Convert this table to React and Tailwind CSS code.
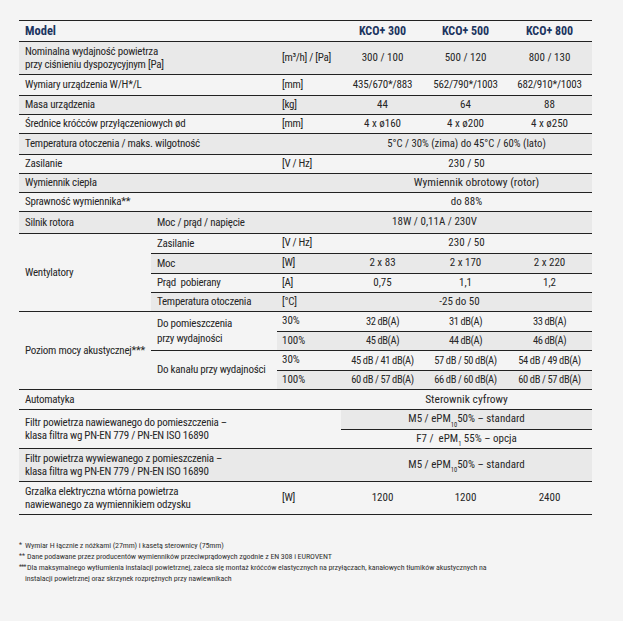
import React from "react";

const G = "bg-[#e9e9e9]";
const N = "text-[11px]";
const DB = "text-[10.5px] tracking-[-0.4px]";

function C({ className = "", children }) {
  return (
    <div className={"flex items-center whitespace-nowrap border-b border-[#222] " + className}>
      {children}
    </div>
  );
}

function L({ className = "", children }) {
  return (
    <C className={"pl-[6px] leading-[13.5px] text-[11px] tracking-[-0.25px] " + className}>
      {children}
    </C>
  );
}

function U({ className = "", children }) {
  return <C className={"pl-[5px] " + className}>{children}</C>;
}

function V({ className = "", children }) {
  return <C className={"justify-center text-center " + className}>{children}</C>;
}

const UL = "text-[11px] tracking-[-0.3px]";

export default function App() {
  return (
    <div
      className="w-[623px] h-[621px] bg-[#f4f4f4] text-[#262626] pt-[20px] pl-[19px]"
      style={{ fontFamily: '"Roboto Condensed", "DejaVu Sans Condensed", "Liberation Sans", sans-serif' }}
    >
      <div className="w-[573px] border-t border-[#222] grid grid-cols-[132px_126px_64px_83px_83px_85px] grid-rows-[21px_33px_21px_19px_19px_21px_19px_19px_19px_22px_20px_20px_19px_19px_20px_19px_20px_19px_20px_20px_19px_33px_33px] text-[11px]">
        {/* header */}
        <C className="col-span-3 pl-[6px] text-[12.5px] font-bold text-[#1c3560]">Model</C>
        <V className="text-[12px] font-bold text-[#1c3560]">KCO+ 300</V>
        <V className="text-[12px] font-bold text-[#1c3560]">KCO+ 500</V>
        <V className="text-[12px] font-bold text-[#1c3560]">KCO+ 800</V>

        {/* nominal */}
        <L className={"col-span-2 " + G}>
          <span>Nominalna wydajność powietrza<br />przy ciśnieniu dyspozycyjnym [Pa]</span>
        </L>
        <U className={UL + " " + G}>[m³/h] / [Pa]</U>
        <V className={N + " " + G}>300 / 100</V>
        <V className={N + " " + G}>500 / 120</V>
        <V className={N + " " + G}>800 / 130</V>

        {/* wymiary */}
        <L className="col-span-2">Wymiary urządzenia W/H*/L</L>
        <U className={UL}>[mm]</U>
        <V className={N + " tracking-[-0.2px]"}>435/670*/883</V>
        <V className={N + " tracking-[-0.2px]"}>562/790*/1003</V>
        <V className={N + " tracking-[-0.2px]"}>682/910*/1003</V>

        {/* masa */}
        <L className={"col-span-2 " + G}>Masa urządzenia</L>
        <U className={UL + " " + G}>[kg]</U>
        <V className={N + " " + G}>44</V>
        <V className={N + " " + G}>64</V>
        <V className={N + " " + G}>88</V>

        {/* srednice */}
        <L className="col-span-2">Średnice króćców przyłączeniowych ød</L>
        <U className={UL}>[mm]</U>
        <V className={N}>4 x ø160</V>
        <V className={N}>4 x ø200</V>
        <V className={N}>4 x ø250</V>

        {/* temperatura */}
        <L className={"col-span-3 " + G}>Temperatura otoczenia / maks. wilgotność</L>
        <V className={"col-span-3 text-[10.7px] " + G}>5°C / 30% (zima) do 45°C / 60% (lato)</V>

        {/* zasilanie */}
        <L className="col-span-2">Zasilanie</L>
        <U className={UL}>[V / Hz]</U>
        <V className={"col-span-3 " + N}>230 / 50</V>

        {/* wymiennik */}
        <L className={"col-span-3 " + G}>Wymiennik ciepła</L>
        <V className={"col-span-3 text-[11.5px] pl-[20px] " + G}>Wymiennik obrotowy (rotor)</V>

        {/* sprawnosc */}
        <L className="col-span-3">Sprawność wymiennika**</L>
        <V className={"col-span-3 " + N}>do 88%</V>

        {/* silnik */}
        <L className={G}>Silnik rotora</L>
        <L className={G}>Moc / prąd / napięcie</L>
        <V className={"col-span-4 " + N + " " + G}>18W / 0,11A / 230V</V>

        {/* wentylatory */}
        <L className="row-span-4">Wentylatory</L>
        <L>Zasilanie</L>
        <U className={UL}>[V / Hz]</U>
        <V className={"col-span-3 " + N}>230 / 50</V>

        <L className={G}>Moc</L>
        <U className={UL + " " + G}>[W]</U>
        <V className={N + " " + G}>2 x 83</V>
        <V className={N + " " + G}>2 x 170</V>
        <V className={N + " " + G}>2 x 220</V>

        <L>Prąd&nbsp; pobierany</L>
        <U className={UL}>[A]</U>
        <V className={N}>0,75</V>
        <V className={N}>1,1</V>
        <V className={N}>1,2</V>

        <L className={G}>Temperatura otoczenia</L>
        <U className={UL + " " + G}>[°C]</U>
        <V className={"col-span-3 pr-[14px] " + N + " " + G}>-25 do 50</V>

        {/* poziom */}
        <L className="row-span-4">Poziom mocy akustycznej***</L>
        <L className="row-span-2 leading-[15px]">
          <span>Do pomieszczenia<br />przy wydajności</span>
        </L>
        <U className={N}>30%</U>
        <V className={DB}>32 dB(A)</V>
        <V className={DB}>31 dB(A)</V>
        <V className={DB}>33 dB(A)</V>

        <U className={N + " " + G}>100%</U>
        <V className={DB + " " + G}>45 dB(A)</V>
        <V className={DB + " " + G}>44 dB(A)</V>
        <V className={DB + " " + G}>46 dB(A)</V>

        <L className="row-span-2">Do kanału przy wydajności</L>
        <U className={N}>30%</U>
        <V className={DB}>45 dB / 41 dB(A)</V>
        <V className={DB}>57 dB / 50 dB(A)</V>
        <V className={DB}>54 dB / 49 dB(A)</V>

        <U className={N + " " + G}>100%</U>
        <V className={DB + " " + G}>60 dB / 57 dB(A)</V>
        <V className={DB + " " + G}>66 dB / 60 dB(A)</V>
        <V className={DB + " " + G}>60 dB / 57 dB(A)</V>

        {/* automatyka */}
        <L className="col-span-3">Automatyka</L>
        <V className="col-span-3 text-[11.5px]">Sterownik cyfrowy</V>

        {/* filtr nawiewany */}
        <L className="col-span-3 row-span-2">
          <span>Filtr powietrza nawiewanego do pomieszczenia –<br />klasa filtra wg PN-EN 779 / PN-EN ISO 16890</span>
        </L>
        <V className={"col-span-3 text-[11px] " + G}>
          <span>M5 / ePM<sub className="text-[6.5px] align-[-3px]">10</sub>50% – standard</span>
        </V>
        <V className="col-span-3 text-[11px]">
          <span>F7 /&nbsp; ePM<sub className="text-[6.5px] align-[-3px]">1</sub> 55% – opcja</span>
        </V>

        {/* filtr wywiewany */}
        <L className={"col-span-3 " + G}>
          <span>Filtr powietrza wywiewanego z pomieszczenia –<br />klasa filtra wg PN-EN 779 / PN-EN ISO 16890</span>
        </L>
        <V className={"col-span-3 text-[11px] " + G}>
          <span>M5 / ePM<sub className="text-[6.5px] align-[-3px]">10</sub>50% – standard</span>
        </V>

        {/* grzalka */}
        <L className="col-span-2">
          <span>Grzałka elektryczna wtórna powietrza<br />nawiewanego za wymiennikiem odzysku</span>
        </L>
        <U className={UL}>[W]</U>
        <V className={N}>1200</V>
        <V className={N}>1200</V>
        <V className={N}>2400</V>
      </div>

      <div className="mt-[25px] text-[8px] leading-[11px] text-[#333] whitespace-nowrap tracking-[-0.1px]">
        <div className="flex">
          <span className="w-[6px] shrink-0 text-[7px]">*</span>
          <span>Wymiar H łącznie z nóżkami (27mm) i kasetą sterownicy (75mm)</span>
        </div>
        <div className="flex">
          <span className="w-[8px] shrink-0 text-[7px]">**</span>
          <span>Dane podawane przez producentów wymienników przeciwprądowych zgodnie z EN 308 i EUROVENT</span>
        </div>
        <div className="flex">
          <span className="w-[8px] shrink-0 text-[6.5px] tracking-[-0.5px]">***</span>
          <span>Dla maksymalnego wytłumienia instalacji powietrznej, zaleca się montaż króćców elastycznych na przyłączach, kanałowych tłumików akustycznych na</span>
        </div>
        <div className="pl-[6px]">instalacji powietrznej oraz skrzynek rozprężnych przy nawiewnikach</div>
      </div>
    </div>
  );
}
